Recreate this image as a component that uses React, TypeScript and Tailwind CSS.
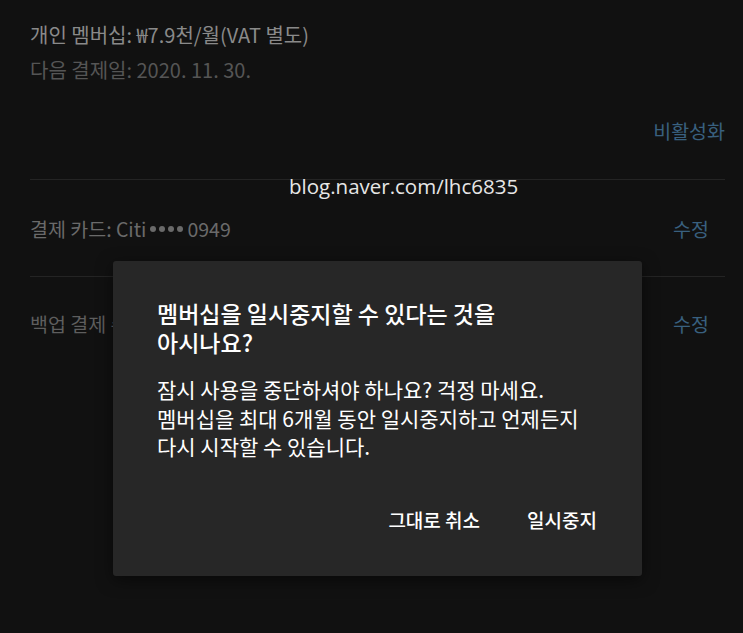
import React from "react";

const kr = { fontFamily: '"Noto Sans CJK KR", "Noto Sans", sans-serif' };

function Dots() {
  return (
    <span className="mx-[4px] inline-flex items-center gap-[3px] align-middle">
      <span className="h-[6px] w-[6px] rounded-full bg-current" />
      <span className="h-[6px] w-[6px] rounded-full bg-current" />
      <span className="h-[6px] w-[6px] rounded-full bg-current" />
      <span className="h-[6px] w-[6px] rounded-full bg-current" />
    </span>
  );
}

export default function App() {
  return (
    <div className="relative h-[633px] w-[743px] overflow-hidden bg-[#111111]" style={kr}>
      <div className="pl-[30px] pr-[18px] pt-[22px]">
        <div className="text-[20px] leading-[26px] text-[#8a8a8a]">개인 멤버십: ₩7.9천/월(VAT 별도)</div>
        <div className="mt-[9px] text-[20px] leading-[26px] text-[#555555]">다음 결제일: 2020. 11. 30.</div>
        <div className="mt-[35px] flex justify-end text-[19.5px] leading-[26px] text-[#39607f]">비활성화</div>
        <div className="mt-[35px] border-t border-[#242424]" />
        <div className="mt-[36px] flex items-center justify-between pr-[16px] text-[19.5px] leading-[26px]">
          <span className="flex items-center text-[#6a6a6a]">
            결제 카드: Citi
            <Dots />
            0949
          </span>
          <span className="text-[#39607f]">수정</span>
        </div>
        <div className="mt-[34px] border-t border-[#242424]" />
        <div className="mt-[34px] flex items-center justify-between pr-[16px] text-[19.5px] leading-[26px]">
          <span className="text-[#5e5e5e]">백업 결제 수단</span>
          <span className="text-[#39607f]">수정</span>
        </div>
      </div>

      <div
        className="absolute left-[289px] top-[173px] text-[20.5px] leading-[26px] text-[#e6e6e6]"
        style={{ fontFamily: '"Open Sans", "DejaVu Sans", sans-serif' }}
      >
        blog.naver.com/lhc6835
      </div>

      <div className="absolute left-[113px] top-[261px] h-[315px] w-[529px] rounded-[3px] bg-[#272727] pl-[44px] pr-[45px] pt-[38px] shadow-[0_4px_16px_rgba(0,0,0,0.5)]">
        <div className="text-[23px] font-medium leading-[29px] text-white">
          멤버십을 일시중지할 수 있다는 것을
          <br />
          아시나요?
        </div>
        <div className="mt-[18px] text-[21px] leading-[28.5px] text-white">
          잠시 사용을 중단하셔야 하나요? 걱정 마세요.
          <br />
          멤버십을 최대 6개월 동안 일시중지하고 언제든지
          <br />
          다시 시작할 수 있습니다.
        </div>
        <div className="mt-[47px] flex justify-end gap-[47px] text-[19px] font-medium leading-[24px] text-white">
          <span>그대로 취소</span>
          <span>일시중지</span>
        </div>
      </div>
    </div>
  );
}
